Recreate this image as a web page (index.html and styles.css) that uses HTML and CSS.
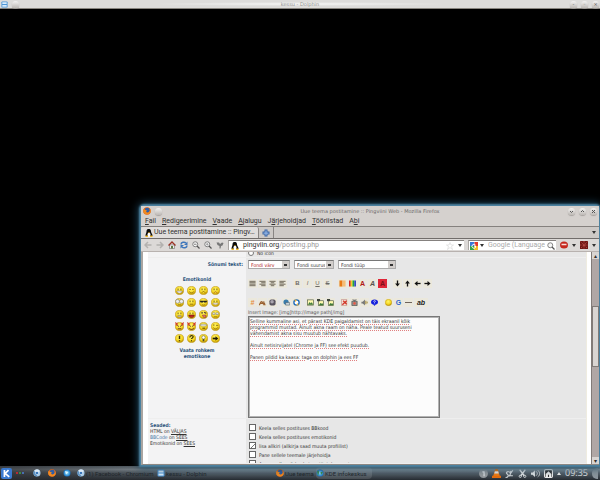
FILE: index.html
```html
<!DOCTYPE html>
<html lang="et">
<head>
<meta charset="utf-8">
<title>Uue teema postitamine</title>
<link rel="stylesheet" href="styles.css">
</head>
<body>
<svg class="defs" aria-hidden="true">
  <defs>
    <radialGradient id="sun" cx=".45" cy=".35" r=".65"><stop offset="0" stop-color="#fff56a"/><stop offset=".65" stop-color="#f4d51f"/><stop offset="1" stop-color="#b68b00"/></radialGradient>
    <radialGradient id="globe"><stop offset="0" stop-color="#9be6ff"/><stop offset="1" stop-color="#1673c4"/></radialGradient>
    <symbol id="face" viewBox="0 0 16 16"><circle cx="8" cy="8" r="7.3" fill="url(#sun)" stroke="#c09a10"/></symbol>
    <symbol id="eyes" viewBox="0 0 16 16"><path d="M5.5 4.5v3M10.5 4.5v3" stroke="#6b5710" stroke-width="1.6"/></symbol>
    <symbol id="firefox" viewBox="0 0 16 16"><circle cx="8" cy="8" r="7.5" fill="#e2661a"/><circle cx="8.5" cy="6.5" r="4.8" fill="#2f5fa8"/><path d="M1 4c2 1 2 2 5 2 2 0 2 2 0 3 1 3 5 3 7 0 1-2 1-4 0-6 5 5 2 12-5 12S-1 9 1 4Z" fill="#f08a22"/></symbol>
    <symbol id="penguin" viewBox="0 0 16 16"><path d="M3 5c0-7 9-7 9 0 0 3 3 4 3 9H1c0-5 2-6 2-9Z" fill="#0c0c0c"/><ellipse cx="8" cy="11.5" rx="3.2" ry="3.8" fill="#fff"/><path d="M6 6h4l-2 2Z" fill="#f4b81c"/><path d="M1 13h4l1 3H1ZM11 13h4v3h-5Z" fill="#f4b81c"/></symbol>
    <symbol id="chromium" viewBox="0 0 16 16"><circle cx="8" cy="8" r="7" fill="#a8cbe8"/><path d="M8 8 2 4a7 7 0 0 1 12 0Z" fill="#dcebf8"/><path d="m8 8 0 7A7 7 0 0 1 2 4Z" fill="#5d92c2"/><circle cx="8" cy="8" r="3.2" fill="#2b6cb3" stroke="#fff"/></symbol>
    <symbol id="files" viewBox="0 0 16 16"><rect x="1" y="1" width="14" height="14" rx="2" fill="#4f96d6"/><path d="M3 3h10v4H3ZM3 9h10v4H3Z" fill="#d8ecfb"/></symbol>
    <symbol id="lens" viewBox="0 0 16 16"><circle cx="6.5" cy="6.5" r="5" fill="#f6f6f6" stroke="#6a6a6a" stroke-width="1.6"/><path d="m10 10 5 5" stroke="#555" stroke-width="2.4"/></symbol>
    <symbol id="lines" viewBox="0 0 16 16"><path d="M1 3h14M1 6.3h14M1 9.6h14M1 13h14" stroke="#625a4c" stroke-width="2"/></symbol>
    <symbol id="arrow" viewBox="0 0 16 16"><path d="M1 8h9" stroke="#111" stroke-width="3"/><path d="M8 2.5 15 8l-7 5.5Z" fill="#111"/></symbol>
    <symbol id="picture" viewBox="0 0 16 16"><rect x="1" y="2" width="14" height="12" fill="#fff9b0" stroke="#4d5944" stroke-width="1.5"/><path d="m2 13 4-6 3 3 2-3 3 6Z" fill="#3f7a3c"/></symbol>
    <symbol id="picture-corner" viewBox="0 0 16 16"><rect x="3" y="4" width="12" height="11" fill="#fff9b0" stroke="#4d5944" stroke-width="1.5"/><path d="m4 14 4-5 3 2 1-2 3 5Z" fill="#3f7a3c"/><path d="M0 0h7v5H0Z" fill="#3c443a"/></symbol>
  </defs>
</svg>

<header class="titlebar desktop-title">
  <span class="side"><svg class="ico7"><use href="#files"/></svg><i class="orb"></i></span>
  <h1>kessu - Dolphin</h1>
  <span class="side end"><button class="orb" aria-label="Minimeeri">-</button><button class="orb" aria-label="Maksimeeri">◦</button><button class="orb" aria-label="Sulge">×</button></span>
</header>

<main class="desktop">
  <section class="window">
    <header class="titlebar">
      <span class="side"><svg class="ico8"><use href="#firefox"/></svg><i class="orb"></i></span>
      <h2>Uue teema postitamine :: Pingviini Web - Mozilla Firefox</h2>
      <span class="side end"><button class="orb" aria-label="Minimeeri"><svg viewBox="0 0 7 7"><path d="m2 3 1.500 1.500L5 3" fill="none" stroke="#555"/></svg></button><button class="orb" aria-label="Maksimeeri"><svg viewBox="0 0 7 7"><path d="m2 4 1.500-1.500L5 4" fill="none" stroke="#555"/></svg></button><button class="orb" aria-label="Sulge"><svg viewBox="0 0 7 7"><path d="m2 2 3 3M5 2 2 5" stroke="#555"/></svg></button></span>
    </header>
    <nav class="menu">
      <a href="#"><u>F</u>ail</a><a href="#"><u>R</u>edigeerimine</a><a href="#"><u>V</u>aade</a><a href="#"><u>A</u>jalugu</a><a href="#">J<u>ä</u>rjehoidjad</a><a href="#"><u>T</u>ööriistad</a><a href="#">A<u>b</u>i</a>
    </nav>
    <div class="tabs">
      <button class="tab"><svg class="ico8"><use href="#penguin"/></svg><span>Uue teema postitamine :: Pingv…</span></button>
      <button class="newtab" aria-label="Uus kaart"><svg class="ico8" viewBox="0 0 16 16"><path d="M8 1v14M1 8h14" stroke="#3a64a4" stroke-width="6"/><path d="M8 3v10M3 8h10" stroke="#8fb2e4" stroke-width="2.500"/></svg></button>
      <i class="caret push"></i>
    </div>
    <div class="nav">
      <button aria-label="Tagasi"><svg viewBox="0 0 16 16"><path d="M15 8H3M8 2 2 8l6 6" fill="none" stroke="#b3b1af" stroke-width="3"/></svg></button>
      <button aria-label="Edasi"><svg viewBox="0 0 16 16"><path d="M1 8h12M8 2l6 6-6 6" fill="none" stroke="#b3b1af" stroke-width="3"/></svg></button>
      <button aria-label="Kodu"><svg viewBox="0 0 16 16"><path d="M3 8h10v7H3Z" fill="#eee" stroke="#555"/><path d="m1 9 7-7 7 7" fill="none" stroke="#9b3124" stroke-width="2.5"/><path d="M6 10h4v5H6Z" fill="#5e7641"/></svg></button>
      <button aria-label="Laadi uuesti"><svg viewBox="0 0 16 16"><path d="M2 7c0-5 7-6 10-3M14 9c0 5-7 6-10 3" fill="none" stroke="#3e76bb" stroke-width="3"/><path d="M15 1v7H8ZM1 15V8h7Z" fill="#3e76bb"/></svg></button>
      <button aria-label="Vähenda"><svg viewBox="0 0 16 16"><use href="#lens"/><path d="M4 6.5h5" stroke="#444" stroke-width="1.3"/></svg></button>
      <button aria-label="Suurenda"><svg viewBox="0 0 16 16"><use href="#lens"/><path d="M4 6.5h5M6.500 4v5" stroke="#666" stroke-width="1"/></svg></button>
      <button aria-label="Märgista"><svg viewBox="0 0 16 16"><path d="M1 3h5l2 3 4-3 3 1-2 5-3 1-1 5H7v-5L3 8Z" fill="#777"/></svg></button>
      <label class="address"><svg class="ico8"><use href="#penguin"/></svg><span class="url">pingviin.org<em>/posting.php</em></span>
        <svg class="ico8 push" viewBox="0 0 16 16"><path d="m8 1 2 5h5l-4 3 2 6-5-4-5 4 2-6-4-3h5Z" fill="#fff" stroke="#ccc"/></svg><i class="caret"></i></label>
      <label class="search"><svg class="ico8" viewBox="0 0 16 16"><path d="M0 0h9v8H0Z" fill="#3976d8"/><path d="M9 0h7v8H9Z" fill="#e5392c"/><path d="M0 8h8v8H0Z" fill="#34a14c"/><path d="M8 8h8v8H8Z" fill="#f0bd25"/><path d="M11 6a4 4 0 1 0 0 5V8H8" fill="none" stroke="#fff" stroke-width="2"/></svg><i class="caret"></i>
        <input type="text" placeholder="Google (Language:" aria-label="Otsing"><svg class="ico8"><use href="#lens"/></svg></label>
      <button aria-label="Adblock"><svg viewBox="0 0 16 16"><ellipse cx="8" cy="8" rx="8" ry="7" fill="#c5281e"/><path d="M3 7h10" stroke="#f5dcd8" stroke-width="3"/></svg></button><i class="caret"></i>
      <button aria-label="Laiendus"><svg viewBox="0 0 16 16"><path d="M0 0h16v16H0Z" fill="#6f1715"/><path d="M1 1l14 14M15 1 1 15M8 0v16M0 8h16" stroke="#c55a50" stroke-width="1.500" stroke-dasharray="3 2"/></svg></button><i class="caret"></i>
    </div>

    <div class="viewport">
      <form class="page">
        <div class="cell left"></div>
        <div class="cell right icons"><label><input type="radio" name="icon"> No icon</label></div>

        <div class="cell left compose">
          <strong class="heading end">Sõnumi tekst:</strong>
          <strong class="heading center">Emotikonid</strong>
          <div class="faces">
            <svg viewBox="0 0 16 16"><use href="#face"/><use href="#eyes"/><path d="M3 9h10c-1 5-9 5-10 0Z" fill="#fff" stroke="#765"/></svg>
            <svg viewBox="0 0 16 16"><use href="#face"/><path d="M4 6h3M9 6h3M4 10c2 3 6 3 8 0" fill="none" stroke="#86670e" stroke-width="1.500"/></svg>
            <svg viewBox="0 0 16 16"><use href="#face"/><use href="#eyes"/><path d="M5 12c2-3 4-3 6 0" fill="none" stroke="#86670e" stroke-width="1.500"/></svg>
            <svg viewBox="0 0 16 16"><use href="#face"/><use href="#eyes"/><path d="M5 13c2-4 4-4 6 0" fill="none" stroke="#a63" stroke-width="1.500"/></svg>
            <svg viewBox="0 0 16 16"><use href="#face"/><circle cx="4.500" cy="6" r="3.500" fill="#eee" stroke="#777"/><circle cx="11.500" cy="6" r="3.500" fill="#eee" stroke="#777"/><path d="M5 12h6" stroke="#654a08"/></svg>
            <svg viewBox="0 0 16 16"><use href="#face"/><use href="#eyes"/><path d="M5 11h6" stroke="#86670e" stroke-width="1.500"/></svg>
            <svg viewBox="0 0 16 16"><use href="#face"/><path d="M1 5h14l-2 3H9L8 6 7 8H3Z" fill="#222"/><path d="M5 11c2 2 4 2 6 0" fill="none" stroke="#654a08"/></svg>
            <svg viewBox="0 0 16 16"><use href="#face"/><use href="#eyes"/><path d="M3 9h10c-1 4-9 4-10 0Z" fill="#fff" stroke="#876"/></svg>
            <svg viewBox="0 0 16 16"><use href="#face"/><use href="#eyes"/><path d="M5 10h6v2H5Z" fill="#fff" stroke="#765"/></svg>
            <svg viewBox="0 0 16 16"><use href="#face"/><use href="#eyes"/><path d="M3 9h10c-1 6-9 6-10 0Z" fill="#c2281f" stroke="#611"/></svg>
            <svg viewBox="0 0 16 16"><use href="#face"/><path d="M4 5h3M9 4l4 2" stroke="#543" stroke-width="2"/><path d="M6 9h6v4H8Z" fill="#e67c6c" stroke="#833"/></svg>
            <svg viewBox="0 0 16 16"><use href="#face"/><path d="M3 5h4v3H3ZM9 5h4v3H9Z" fill="#fff" stroke="#777"/><path d="M5 12h6" stroke="#654a08"/></svg>
            <svg viewBox="0 0 16 16"><use href="#face"/><path d="M0 0l6 3-4 4ZM16 0l-6 3 4 4Z" fill="#d1432a"/><path d="m4 6 3 2M12 6 9 8M5 12h6" stroke="#523" stroke-width="1.500"/></svg>
            <svg viewBox="0 0 16 16"><use href="#face"/><path d="M0 0l6 3-4 4ZM16 0l-6 3 4 4Z" fill="#d1432a"/><path d="m4 6 3 2M12 6 9 8M4 11c3 3 5 3 8 0" fill="none" stroke="#523" stroke-width="1.500"/></svg>
            <svg viewBox="0 0 16 16"><use href="#face"/><path d="M3 4h10v3H3Z" fill="#fff" stroke="#777"/><path d="M6 11h5" stroke="#654a08" stroke-width="2"/></svg>
            <svg viewBox="0 0 16 16"><use href="#face"/><path d="M5 4v3M9 6h4M4 10c3 3 5 3 8 0" fill="none" stroke="#86670e" stroke-width="1.500"/></svg>
            <svg viewBox="0 0 16 16"><use href="#face"/><path d="M8 3v6M8 11v2" stroke="#332a06" stroke-width="2.500"/></svg>
            <svg viewBox="0 0 16 16"><use href="#face"/><path d="M5 6c0-4 6-4 6-1 0 2-3 2-3 4M8 11v2" fill="none" stroke="#332a06" stroke-width="2"/></svg>
            <svg viewBox="0 0 16 16"><use href="#face"/><circle cx="8" cy="6" r="3" fill="#fff" stroke="#554"/><path d="M8 9v4" stroke="#443" stroke-width="3"/></svg>
            <svg viewBox="0 0 16 16"><use href="#face"/><path d="M3 8h6" stroke="#221b03" stroke-width="3"/><path d="m8 4 5 4-5 4Z" fill="#221b03"/></svg>
          </div>
          <a class="heading center more" href="#">Vaata rohkem<br>emotikone</a>
        </div>

        <div class="cell right compose">
          <div class="selects">
            <select class="color" aria-label="Fondi värv"><option>Fondi värv</option></select>
            <select class="size" aria-label="Fondi suurus"><option>Fondi suurus</option></select>
            <select class="type" aria-label="Fondi tüüp"><option>Fondi tüüp</option></select>
          </div>
          <div class="tools first">
            <span><button type="button" aria-label="Rööpjoondus"><svg><use href="#lines"/></svg></button><button type="button" aria-label="Paremale"><svg viewBox="0 0 16 16"><path d="M1 3h14M5 6.300h10M1 9.600h14M5 13h10" stroke="#625a4c" stroke-width="2"/></svg></button><button type="button" aria-label="Keskele"><svg viewBox="0 0 16 16"><path d="M1 3h14M4 6.300h8M1 9.600h14M4 13h8" stroke="#625a4c" stroke-width="2"/></svg></button><button type="button" aria-label="Vasakule"><svg viewBox="0 0 16 16"><path d="M1 3h14M1 6.300h10M1 9.600h14M1 13h10" stroke="#625a4c" stroke-width="2"/></svg></button></span>
            <span class="letters"><button type="button"><b>B</b></button><button type="button"><i>I</i></button><button type="button"><u>U</u></button><button type="button"><s>S</s></button></span>
            <span><button type="button" aria-label="Hajuta"><svg viewBox="0 0 16 16"><path d="M1 1h7v14H1Z" fill="#e97b15"/><path d="M8 1h7v14H8Z" fill="#f5bd76"/></svg></button><button type="button" aria-label="Gradient"><svg viewBox="0 0 16 16"><path d="M0 1h4v14H0Z" fill="#d12525"/><path d="M4 1h4v14H4Z" fill="#efcf25"/><path d="M8 1h4v14H8Z" fill="#23a33a"/><path d="M12 1h4v14h-4Z" fill="#344bc4"/></svg></button><button type="button" class="red"><b>A</b></button><button type="button"><b><i>A</i></b></button><button type="button" class="redfill"><b>A</b></button></span>
            <span><button type="button" aria-label="Alla"><svg class="down"><use href="#arrow"/></svg></button><button type="button" aria-label="Üles"><svg class="up"><use href="#arrow"/></svg></button><button type="button" aria-label="Vasakule liikuv"><svg class="back"><use href="#arrow"/></svg></button><button type="button" aria-label="Paremale liikuv"><svg><use href="#arrow"/></svg></button></span>
          </div>
          <div class="tools second">
            <span><button type="button" class="orange"><b><i>#</i></b></button><button type="button" aria-label="Märkus"><svg viewBox="0 0 16 16"><path d="M0 14c4-3 2-8 6-8 3 0 1 8 9 7M2 10h12M11 5v9" fill="none" stroke="#9a6131" stroke-width="2.500"/></svg></button><button type="button" aria-label="Kood"><svg viewBox="0 0 16 16"><rect x="1" y="1" width="14" height="14" rx="4" fill="#5a5560"/><circle cx="7" cy="6" r="4" fill="#aaa5b0"/></svg></button></span>
            <span><button type="button" aria-label="E-post"><svg viewBox="0 0 16 16"><circle cx="7" cy="7" r="6" fill="#397bab"/><path d="M6 8h9v6H6Z" fill="#c8d3d8" stroke="#345"/></svg></button><button type="button" aria-label="Viide"><svg viewBox="0 0 16 16"><circle cx="8" cy="8" r="6" fill="#fff" stroke="#1b69bb" stroke-width="3"/><path d="m3 1 6 1-4 5ZM13 15l-6-1 4-5Z" fill="#f2b23c"/></svg></button></span>
            <span><button type="button" aria-label="Pilt"><svg><use href="#picture"/></svg></button><button type="button" aria-label="Vasak pilt"><svg><use href="#picture-corner"/></svg></button><button type="button" aria-label="Parem pilt"><svg><use href="#picture-corner"/></svg></button></span>
            <span><button type="button" aria-label="Flash"><svg viewBox="0 0 16 16"><path d="M1 1h12v14H1Z" fill="#f3dfd5" stroke="#a66"/><path d="M3 13 13 4M5 4l8 8" stroke="#d3382a" stroke-width="3"/></svg></button><button type="button" aria-label="Video"><svg viewBox="0 0 16 16"><path d="M2 5h12v10H2ZM4 1l4 4 4-4" fill="#999" stroke="#444" stroke-width="1.500"/><circle cx="8" cy="10" r="3" fill="#e65b48"/></svg></button><button type="button" aria-label="Heli"><svg viewBox="0 0 16 16"><path d="M1 6h3l5-5v14l-5-5H1Z" fill="#777"/><path d="M11 4v8M14 6v4" stroke="#997f26" stroke-width="2"/></svg></button><button type="button" aria-label="Küsimus"><svg viewBox="0 0 16 16"><ellipse cx="8" cy="7" rx="8" ry="6" fill="#1622dc"/><path d="m5 12 3 4 3-4Z" fill="#1622dc"/><path d="M6 6c0-3 4-3 4-1L8 8v2" fill="none" stroke="#fff" stroke-width="1.500"/></svg></button></span>
            <span><button type="button" aria-label="Emotikon"><svg viewBox="0 0 16 16"><use href="#face"/></svg></button><button type="button" class="blue"><b>G</b></button><button type="button" aria-label="Joon"><svg viewBox="0 0 16 16"><path d="M0 8h16" stroke="#5b5048" stroke-width="2"/></svg></button><button type="button" class="abc"><b><i>ab</i></b></button></span>
          </div>
          <label class="hint" for="message">Insert Image: [img]http://image path[/img]</label>
          <textarea id="message" spellcheck="false">Selline kummaline asi, et pärast KDE paigaldamist on täis ekraanil kõik
programmid mustad. Ainult akna raam on näha. Peale teatud suuruseni
vähendamist akna sisu muutub nähtavaks.

Ainult netisirvijatel (Chrome ja FF) see efekt puudub.

Panen pildid ka kaasa: taga on dolphin ja ees FF</textarea>
        </div>

        <div class="cell left settings"><strong class="heading">Seaded:</strong><span>HTML on <a href="#">VÄLJAS</a></span><span><em>BBCode</em> on <a href="#">SEES</a></span><span>Emotikonid on <a href="#">SEES</a></span></div>
        <div class="cell right options">
          <label><input type="checkbox"> Keela selles postituses BBkood</label>
          <label><input type="checkbox"> Keela selles postituses emotikonid</label>
          <label><input type="checkbox" checked> lisa allkiri (allkirja saad muuta profiilist)</label>
          <label><input type="checkbox"> Pane sellele teemale järjehoidja</label>
          <label><input type="checkbox"> Anna mulle märku, kui postitatakse vastus</label>
        </div>
      </form>
      <div class="scrollbar"><i>▴</i><b></b><i>▾</i></div>
    </div>
  </section>
</main>

<footer class="taskbar">
  <button class="start" aria-label="K-menüü"><svg viewBox="0 0 16 16"><rect width="16" height="16" rx="3" fill="#3b7ad0"/><path d="M5 3v10M11 3 6 8l6 5" fill="none" stroke="#fff" stroke-width="2.500"/></svg></button>
  <span class="dots"><i></i><i></i><i></i></span>
  <span class="launch"><svg class="ico8"><use href="#chromium"/></svg><svg class="ico8"><use href="#firefox"/></svg><svg class="ico8" viewBox="0 0 16 16"><circle cx="8" cy="8" r="7" fill="url(#globe)"/><path d="m4 4 7 2-5 5Z" fill="#d9f5ff"/></svg></span>
  <button class="task"><svg class="ico8"><use href="#chromium"/></svg><span>(1) Facebook - Chromium</span></button>
  <button class="task lit"><svg class="ico8"><use href="#files"/></svg><span>kessu - Dolphin</span></button>
  <button class="task dark"><svg class="ico8"><use href="#firefox"/></svg><span>Uue teema</span></button>
  <button class="task last"><svg class="ico8" viewBox="0 0 16 16"><circle cx="8" cy="8" r="7" fill="url(#globe)"/><path d="M2 5c5-5 5 2 2 9M9 6h5l-4 6Z" fill="#3b8d52"/></svg><span>KDE infokeskus</span></button>
  <span class="tray">
    <svg viewBox="0 0 16 16"><circle cx="8" cy="8" r="8" fill="#92979b"/><path d="M6 5h3v8" fill="none" stroke="#dfe3e5" stroke-width="2"/></svg>
    <svg viewBox="0 0 16 16"><path d="m6 0h4l4 13H2Z" fill="#f17c12"/><path d="M5 4h6l1 4H4Z" fill="#eee"/><path d="M0 12h16v4H0Z" fill="#e46c0c"/></svg>
    <svg viewBox="0 0 16 16"><path d="M1 15c5 0 6-4 3-6S3 4 7 5s3 5 0 8M9 9l5-7M9 4l4 1M9 12h5" fill="none" stroke="#d5d9dc" stroke-width="2"/></svg>
    <svg viewBox="0 0 16 16"><path d="m3 1 8 11M13 1 5 12" stroke="#dfe2e4" stroke-width="2.500"/><circle cx="4" cy="13" r="2" fill="none" stroke="#dfe2e4" stroke-width="1.500"/><circle cx="12" cy="13" r="2" fill="none" stroke="#dfe2e4" stroke-width="1.500"/></svg>
    <svg viewBox="0 0 16 16"><path d="M0 6h3l4-4v12l-4-4H0Z" fill="#e2e5e7"/><path d="M9 4c3 3 3 5 0 8M12 2c5 5 4 9 0 12" fill="none" stroke="#d5d9dc" stroke-width="1.500"/></svg>
    <svg viewBox="0 0 16 16"><rect x="1" y="1" width="14" height="14" rx="2" fill="#333" stroke="#eee" stroke-width="2"/><path d="M3 9 8 4l5 5v5H9v-4H7v4H3Z" fill="#eee"/></svg>
    <i class="caret up"></i><time>09:35</time><i class="cashew"></i>
  </span>
</footer>
</body>
</html>
```

FILE: styles.css
```css
* { box-sizing: border-box; }
body { margin: 0; height: 100vh; display: flex; flex-direction: column; overflow: hidden; background: #000; font: 7px/9px Roboto, "Liberation Sans", sans-serif; color: #303030; }
button, input, select, textarea { font: inherit; color: inherit; margin: 0; }
button { border: 0; padding: 0; background: none; }
a { color: inherit; text-decoration: none; }
svg { display: block; flex: none; }
.defs { position: absolute; width: 0; height: 0; }
.ico7 { width: 7px; height: 7px; }
.ico8 { width: 8px; height: 8px; }
.push { margin-left: auto; }
.caret { flex: none; border: 2px solid transparent; border-top: 3px solid #333; border-bottom: 0; }
.caret.up { border-top: 0; border-bottom: 3px solid #eee; }

.titlebar { flex: none; display: grid; grid-template-columns: 1fr auto 1fr; align-items: center; height: 10px; padding: 0 2px; background: #d5d1ce; }
.titlebar h1, .titlebar h2 { margin: 0; font: 5px/8px "DejaVu Sans", sans-serif; color: #6a6868; }
.desktop-title { height: 9px; padding: 0 1px; background: radial-gradient(ellipse at center, #f6f6f5, #dddcda 35%); border-bottom: 1px solid #88857f; }
.desktop-title h1 { color: #929291; }
.side { display: flex; align-items: center; gap: 4px; }
.side.end { justify-content: flex-end; }
.orb { display: block; width: 7px; height: 7px; border-radius: 50%; background: linear-gradient(#f3f2f1, #bdb9b5); box-shadow: 0 1px 1px #a5a19d; font: 5px/6px "DejaVu Sans", sans-serif; color: #555; text-align: center; }

.desktop { flex: 1; min-height: 0; position: relative; background: #000; }
.window { position: absolute; inset: 197px 1px 1px 141px; display: flex; flex-direction: column; background: #d5d1ce; border-radius: 3px 3px 0 0; box-shadow: 0 0 2px 2px #4f86a5, 0 0 8px 3px #1b4258; }
.menu { display: flex; gap: 6px; height: 11px; padding: 0 4px; line-height: 10px; border-bottom: 1px solid #85817e; }
.tabs { display: flex; align-items: center; height: 12px; padding-right: 3px; background: #cdc9c6; border-bottom: 1px solid #716d6b; }
.tab { display: flex; align-items: center; gap: 1px; height: 11px; padding: 0 3px 0 4px; background: #e0dddb; border-right: 1px solid #898583; border-radius: 2px 2px 0 0; }
.newtab { height: 11px; padding: 0 3px; border-right: 1px solid #898583; }
.nav { display: flex; align-items: center; gap: 4px; height: 13px; padding: 0 3px; background: #dcd9d7; border-bottom: 1px solid #b8b2af; }
.nav button svg { width: 8px; height: 8px; }
.address, .search { display: flex; align-items: center; gap: 4px; height: 10px; padding: 0 2px; background: #fff; border-top: 1px solid #85817f; border-left: 1px solid #aaa6a3; }
.address { flex: 1; }
.url em { font-style: normal; color: #999; }
.search { width: 88px; gap: 2px; padding: 0 1px; }
.search input { flex: 1; min-width: 0; height: 9px; padding: 0 0 0 2px; border: 0; background: none; outline: 0; }
.search input::placeholder { color: #aaa; opacity: 1; }

.viewport { flex: 1; min-height: 0; display: flex; overflow: hidden; background: #fff; border-left: 2px solid #aaa5a1; border-bottom: 1px solid #8c8884; }
.page { flex: 1; display: grid; grid-template-columns: 98px 1fr; grid-template-rows: 6px 161px 1fr; margin: 0 4px 0 5px; border-right: 1px solid #efece0; font: 5px/6px "DejaVu Sans Condensed", "DejaVu Sans", sans-serif; color: #333; }
.cell { min-width: 0; border-bottom: 1px solid #eee; }
.left { background: #f3f3f4; }
.right { background: #e7e7e7; padding-left: 2px; }
.icons { overflow: hidden; }
.icons label { display: flex; align-items: center; gap: 3px; height: 2px; }
.icons input { width: 6px; height: 6px; }
.heading { display: block; font-weight: bold; color: #2d547c; }
.heading.end { text-align: right; padding: 3px 3px 0 0; }
.heading.center { text-align: center; padding-top: 9px; }
.heading.more { padding-top: 4px; }
.faces { display: grid; grid-template-columns: repeat(4, 9px); justify-content: center; gap: 3px; padding-top: 4px; }
.faces svg { width: 9px; height: 9px; }

.selects { display: flex; gap: 4px; padding-top: 2px; }
select { appearance: none; height: 9px; padding: 0 8px 0 2px; border: 1px solid #aaa; border-top-color: #777; background: linear-gradient(#333, #333) right 2px center / 3px 2px no-repeat, linear-gradient(90deg, transparent calc(100% - 7px), #d2cecb 0) #fff; }
.color { width: 42px; color: #b22626; }
.size { width: 40px; }
.type { width: 58px; }
.tools { display: flex; padding-top: 10px; }
.tools.first { gap: 6px; }
.tools.second { gap: 5px; }
.tools span { display: flex; gap: 1px; }
.tools button { width: 9px; height: 9px; background: #ebe8dc; display: grid; place-items: center; font: 7px/9px "Liberation Sans", sans-serif; color: #57534f; }
.tools .letters button { font-size: 6px; color: #6d6a66; }
.tools svg { width: 7px; height: 7px; }
.tools .down { transform: rotate(90deg); }
.tools .up { transform: rotate(-90deg); }
.tools .back { transform: rotate(180deg); }
.tools .red { color: #b01818; }
.tools .redfill { background: #df2638; color: #7c1019; }
.tools .orange { color: #e58b3d; }
.tools .blue { color: #2b62cd; }
.tools .abc { width: 14px; color: #222; }
.hint { display: block; margin: 2px 0 1px; color: #555; }
textarea { display: block; width: 192px; height: 102px; padding: 1px; resize: none; border: 1px solid #777; outline: 1px solid #b3b3b3; outline-offset: -2px; background: #fcfcfc; color: #333; overflow: hidden; white-space: pre; text-decoration: underline dotted #e08080 1px; }

.settings { display: flex; flex-direction: column; padding: 3px 0 0 2px; }
.settings a { text-decoration: underline; }
.settings em { font-style: normal; color: #4c7aa8; }
.options { padding: 4px 0 0 3px; overflow: hidden; }
.options label { display: flex; align-items: center; gap: 3px; height: 9px; }
.options input { appearance: none; width: 7px; height: 7px; border: 1px solid #666; background: #fff; }
.options input:checked { background: linear-gradient(135deg, transparent 45%, #777 45% 58%, transparent 58%) center / 4px 4px no-repeat #fff; }
.scrollbar { width: 8px; display: grid; grid-template-rows: 7px 47fr 62fr 90fr 7px; background: #b0a7a5; border-left: 1px solid #817b78; }
.scrollbar i { font: 6px/7px "DejaVu Sans", sans-serif; text-align: center; background: #d9d5d2; }
.scrollbar b { grid-row: 3; background: #d9d5d2; border: 1px solid #817b78; }
.scrollbar i:last-child { grid-row: 5; }

.taskbar { flex: none; display: flex; align-items: center; height: 14px; padding: 0 2px 0 1px; background: linear-gradient(90deg, rgb(40 40 42 / .7), transparent 35%), linear-gradient(#59656e, #8a969e 25%, #56616a 50%, #252b31); color: #22272c; }
.start svg { width: 11px; height: 11px; }
.dots { display: flex; gap: 1px; padding: 0 9px 0 4px; }
.dots i { width: 2px; height: 2px; background: #b52b32; }
.dots i:nth-child(2) { background: #3a8b42; }
.dots i:nth-child(3) { background: #476fb0; }
.launch { display: flex; gap: 7px; padding-right: 6px; }
.task { display: flex; align-items: center; gap: 1px; flex: 0 0 auto; width: 80px; height: 12px; font-size: 6px; white-space: nowrap; color: #20252a; }
.task.lit { width: 119px; }
.task.dark { width: 40px; }
.task.last { width: 56px; border-radius: 4px; background: rgb(255 255 255 / .12); }
.tray { display: flex; align-items: center; gap: 4px; margin-left: auto; color: #e2e5e7; }
.tray svg { width: 9px; height: 9px; }
.tray time { font: 9px/12px "Open Sans", sans-serif; }
.cashew { width: 6px; height: 11px; border-radius: 5px 0 0 5px; background: #8b959c; }
```
